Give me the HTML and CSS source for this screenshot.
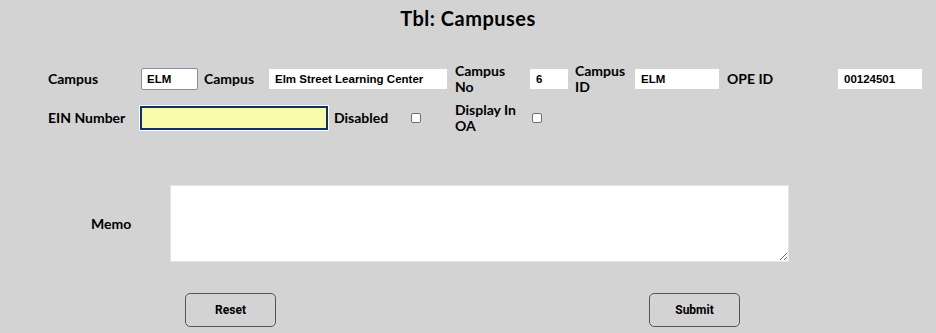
FILE: index.html
```html
<!DOCTYPE html>
<html lang="en">
  <head>
    <meta charset="UTF-8" />
    <title>Tbl: Campuses</title>
    <link rel="stylesheet" href="styles.css">
  </head>
  <body>
    <h1 class="title">Tbl: Campuses</h1>

    <form class="record-form">
      <!-- Row 1 -->
      <div class="form-row row-top">
        <label class="lbl lbl-campus">Campus</label>
        <input class="field field-bordered w-code" type="text" value="ELM">
        <label class="lbl lbl-name">Campus</label>
        <input class="field w-name" type="text" value="Elm Street Learning Center">
        <label class="lbl lbl-no">Campus No</label>
        <input class="field w-no" type="text" value="6">
        <label class="lbl lbl-id">Campus ID</label>
        <input class="field w-id" type="text" value="ELM">
        <label class="lbl lbl-ope">OPE ID</label>
        <input class="field w-ope" type="text" value="00124501">
      </div>

      <!-- Row 2 -->
      <div class="form-row row-second">
        <label class="lbl lbl-ein">EIN Number</label>
        <input class="field field-focus w-ein" type="text" value="">
        <label class="lbl lbl-disabled">Disabled</label>
        <input class="check" type="checkbox">
        <label class="lbl lbl-display">Display In OA</label>
        <input class="check" type="checkbox">
      </div>

      <!-- Memo -->
      <div class="memo-row">
        <label class="lbl lbl-memo">Memo</label>
        <textarea class="memo"></textarea>
      </div>

      <div class="actions">
        <button type="reset" class="btn">Reset</button>
        <button type="button" class="btn">Submit</button>
      </div>
    </form>
  </body>
</html>
```

FILE: styles.css
```css
body {
  margin: 0;
  background: #d3d3d3;
  font-family: Lato, "DejaVu Sans", sans-serif;
  color: #000;
  height: 333px;
  overflow: hidden;
}
.title {
  margin: 0;
  padding-top: 6px;
  text-align: center;
  font-size: 20px;
  line-height: 24px;
  font-weight: 700;
  letter-spacing: 0.5px;
}
.record-form {
  margin-top: 33px;
}
.form-row {
  display: flex;
  align-items: center;
  padding-left: 48px;
}
.row-top {
  height: 32px;
}
.row-second {
  height: 33px;
  margin-top: 6px;
}
.lbl {
  font-size: 14px;
  font-weight: 700;
  line-height: 16px;
  flex-shrink: 0;
}
.lbl-campus { width: 93px; }
.lbl-name { width: 65px; margin-left: 6px; }
.lbl-no { width: 67px; margin-left: 8px; margin-right: 8px; }
.lbl-id { width: 52px; margin-left: 7px; margin-right: 8px; }
.lbl-ope { width: 111px; margin-left: 8px; }
.lbl-ein { width: 92px; }
.lbl-disabled { width: 77px; margin-left: 6px; }
.lbl-display { width: 70px; margin-left: 34px; margin-right: 7px; }

.field {
  box-sizing: border-box;
  height: 20px;
  margin: 0;
  padding: 0 5px;
  border: 1px solid #fff;
  background: #fff;
  font-family: "Liberation Sans", Arial, sans-serif;
  font-size: 11.5px;
  font-weight: 700;
  color: #000;
  flex-shrink: 0;
}
.field-bordered {
  height: 22px;
  border-color: #8c8c9a;
  border-radius: 2px;
}
.field-focus {
  height: 24px;
  background: #f9fba8;
  border: 2px solid #0d2f6e;
  box-shadow: 0 0 0 1px #fff;
}
.w-code { width: 57px; }
.w-name { width: 178px; }
.w-no { width: 38px; }
.w-id { width: 84px; }
.w-ope { width: 84px; }
.w-ein { width: 188px; }

.check {
  appearance: none;
  -webkit-appearance: none;
  box-sizing: border-box;
  width: 10px;
  height: 10px;
  margin: 0;
  border: 1px solid #6f6f7a;
  border-radius: 2px;
  background: #fff;
  flex-shrink: 0;
}

.memo-row {
  display: flex;
  align-items: center;
  padding-left: 91px;
  margin-top: 51px;
}
.lbl-memo {
  width: 79px;
}
.memo {
  box-sizing: border-box;
  width: 619px;
  height: 77px;
  margin: 0;
  border: 1px solid #e4e4e4;
  background: #fff;
  resize: both;
}

.actions {
  display: flex;
  gap: 373px;
  padding-left: 185px;
  margin-top: 31px;
}
.btn {
  box-sizing: border-box;
  width: 91px;
  height: 34px;
  background: transparent;
  border: 1px solid #555;
  border-radius: 5px;
  font-family: Roboto, "Liberation Sans", sans-serif;
  font-size: 12px;
  font-weight: 700;
  color: #000;
}
```
